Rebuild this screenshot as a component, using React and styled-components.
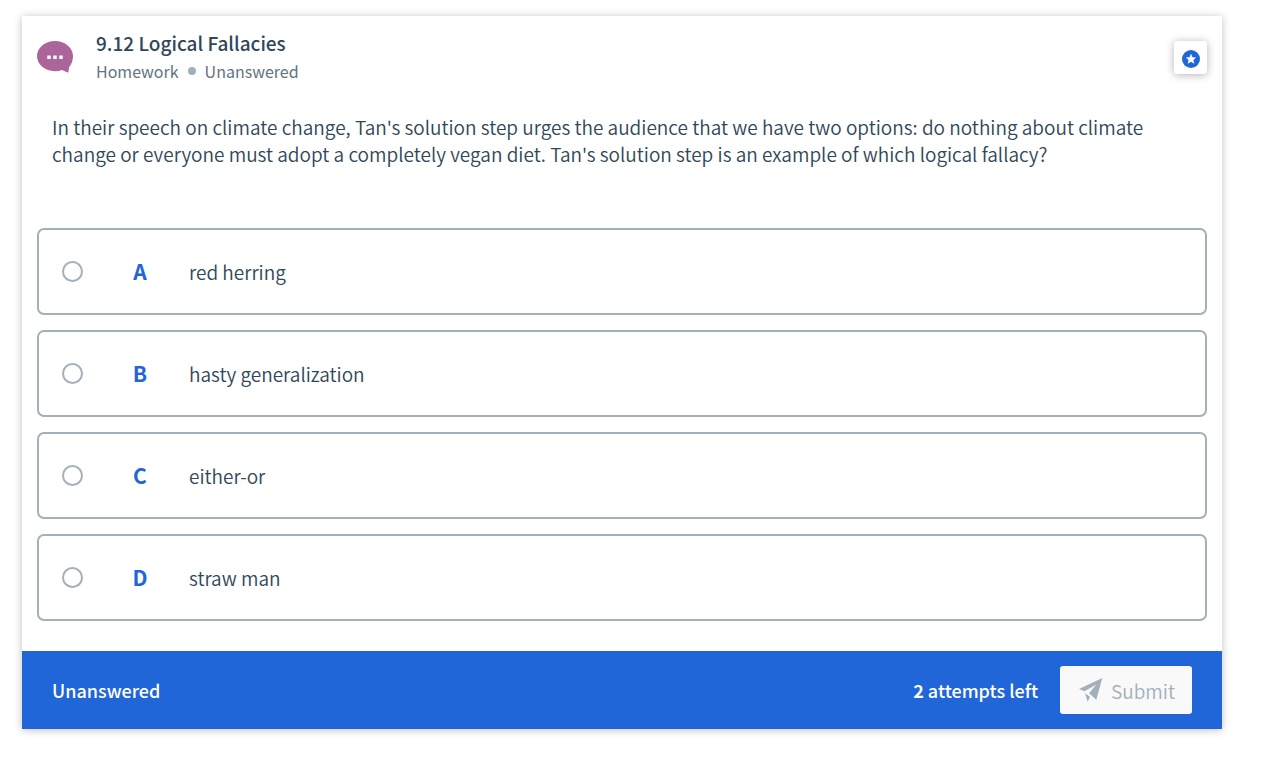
import React, { useState } from 'react'
import styled, { createGlobalStyle } from 'styled-components'

const options = [
  { letter: 'A', text: 'red herring' },
  { letter: 'B', text: 'hasty generalization' },
  { letter: 'C', text: 'either-or' },
  { letter: 'D', text: 'straw man' },
]

const ChatIcon = () => {
  return (
    <svg width='36' height='32' viewBox='0 0 36 32' aria-hidden='true'>
      <path
        fill='#ab659b'
        d='M18 0C8 0 0 6.700 0 15.100S8 30.200 18 30.200c2.500 0 4.800-.4 6.900-1.200l6.300 2.800 1.100-5.800c2.400-2.900 3.700-6.600 3.700-10.900C36 6.700 28 0 18 0z'
      />
      <path fill='#fff' d='M10.300 14.400h3.400v3.500h-3.400zM16.300 14.400h3.400v3.500h-3.400zM22.300 14.400h3.400v3.500h-3.400z' />
    </svg>
  )
}

const StarIcon = () => {
  return (
    <svg width='18' height='18' viewBox='0 0 18 18' aria-hidden='true'>
      <circle cx='9' cy='9' r='9' fill='#2066d9' />
      <path
        fill='#fff'
        d='M9 3.800l1.500 3.500 3.700.3-2.800 2.500.9 3.700L9 11.800l-3.300 2 .9-3.700-2.800-2.500 3.700-.3z'
      />
    </svg>
  )
}

const PlaneIcon = () => {
  return (
    <svg width='24' height='24' viewBox='0 0 24 24' aria-hidden='true'>
      <path
        fill='#a3b0ba'
        d='M23.300 0L0 11l5.500 2.300L17.300 6.500 10 15.300l7.300 6.500zM6 15.300l2.700 8.400 2.300-5z'
      />
    </svg>
  )
}

const App = () => {
  const [selected, setSelected] = useState('')

  return (
    <>
      <GlobalStyle />
      <Page>
        <Card>
          <Header>
            <ChatIcon />
            <Heading>
              <h1>9.12 Logical Fallacies</h1>
              <p>
                Homework <Dot /> Unanswered
              </p>
            </Heading>
            <StarButton type='button' aria-label='Bookmark'>
              <StarIcon />
            </StarButton>
          </Header>
          <Question id='question'>
            In their speech on climate change, Tan's solution step urges the
            audience that we have two options: do nothing about climate change
            or everyone must adopt a completely vegan diet. Tan's solution step
            is an example of which logical fallacy?
          </Question>
          <Options role='radiogroup' aria-labelledby='question'>
            {options.map(({ letter, text }) => {
              return (
                <Option key={letter}>
                  <Radio
                    type='radio'
                    name='answer'
                    value={letter}
                    checked={selected === letter}
                    onChange={() => setSelected(letter)}
                  />
                  <Letter>{letter}</Letter>
                  <span>{text}</span>
                </Option>
              )
            })}
          </Options>
          <Footer>
            <span>Unanswered</span>
            <Attempts>
              <strong>2</strong> attempts left
            </Attempts>
            <SubmitButton type='button' disabled={!selected}>
              <PlaneIcon />
              Submit
            </SubmitButton>
          </Footer>
        </Card>
      </Page>
    </>
  )
}

const GlobalStyle = createGlobalStyle`
  * {
    box-sizing: border-box;
  }
  body {
    margin: 0;
    background: #fff;
    color: #304759;
    font-family: 'Noto Sans CJK SC', 'Open Sans', sans-serif;
    font-size: 19px;
    font-weight: 350;
    line-height: 27px;
  }
  button {
    font: inherit;
  }
`

const Page = styled.main`
  padding: 16px 52px 30px 22px;
`

const Card = styled.section`
  background: #fff;
  box-shadow: 0 1px 8px rgba(0, 0, 0, 0.25);
`

const Header = styled.header`
  display: flex;
  align-items: center;
  padding: 13px 15px 0;
`

const Heading = styled.div`
  flex: 1;
  margin-left: 23px;
  h1 {
    margin: 0;
    font-size: 19px;
    font-weight: 500;
    line-height: 28px;
  }
  p {
    display: flex;
    align-items: center;
    gap: 9px;
    margin: 0;
    color: #637381;
    font-size: 16px;
    font-weight: 400;
    line-height: 28px;
  }
`

const Dot = styled.i`
  width: 8px;
  height: 8px;
  border-radius: 50%;
  background: #a3b0ba;
`

const StarButton = styled.button`
  display: flex;
  align-items: center;
  justify-content: center;
  width: 33px;
  height: 33px;
  padding: 3px 0 0;
  border: none;
  border-radius: 3px;
  background: #fff;
  box-shadow: 0 1px 8px rgba(0, 0, 0, 0.3);
  cursor: pointer;
`

const Question = styled.p`
  margin: 0;
  padding: 28px 30px 61px;
`

const Options = styled.div`
  display: grid;
  gap: 15px;
  padding: 0 15px 30px;
`

const Option = styled.label`
  display: flex;
  align-items: center;
  padding: 28px 23px;
  border: 2px solid #a3b0ba;
  border-radius: 7px;
  cursor: pointer;
`

const Radio = styled.input`
  appearance: none;
  width: 21px;
  height: 21px;
  margin: 0;
  border: 2px solid #a3b0ba;
  border-radius: 50%;
  &:checked {
    border: 6px solid #2066d9;
  }
`

const Letter = styled.span`
  width: 16px;
  margin: 0 41px 0 49px;
  color: #2066d9;
  font-size: 21px;
  font-weight: 700;
  text-align: center;
`

const Footer = styled.footer`
  display: flex;
  align-items: center;
  padding: 15px 30px;
  background: #2066d9;
  color: #fff;
  font-size: 18px;
  font-weight: 500;
`

const Attempts = styled.span`
  margin: 0 22px 0 auto;
  strong {
    font-weight: 700;
  }
`

const SubmitButton = styled.button`
  display: flex;
  align-items: center;
  gap: 8px;
  height: 48px;
  padding: 0 17px 0 19px;
  border: none;
  border-radius: 3px;
  background: #f9f9f9;
  color: #2066d9;
  font-size: 19px;
  font-weight: 350;
  &:disabled {
    color: #a3b0ba;
  }
`

export default App
